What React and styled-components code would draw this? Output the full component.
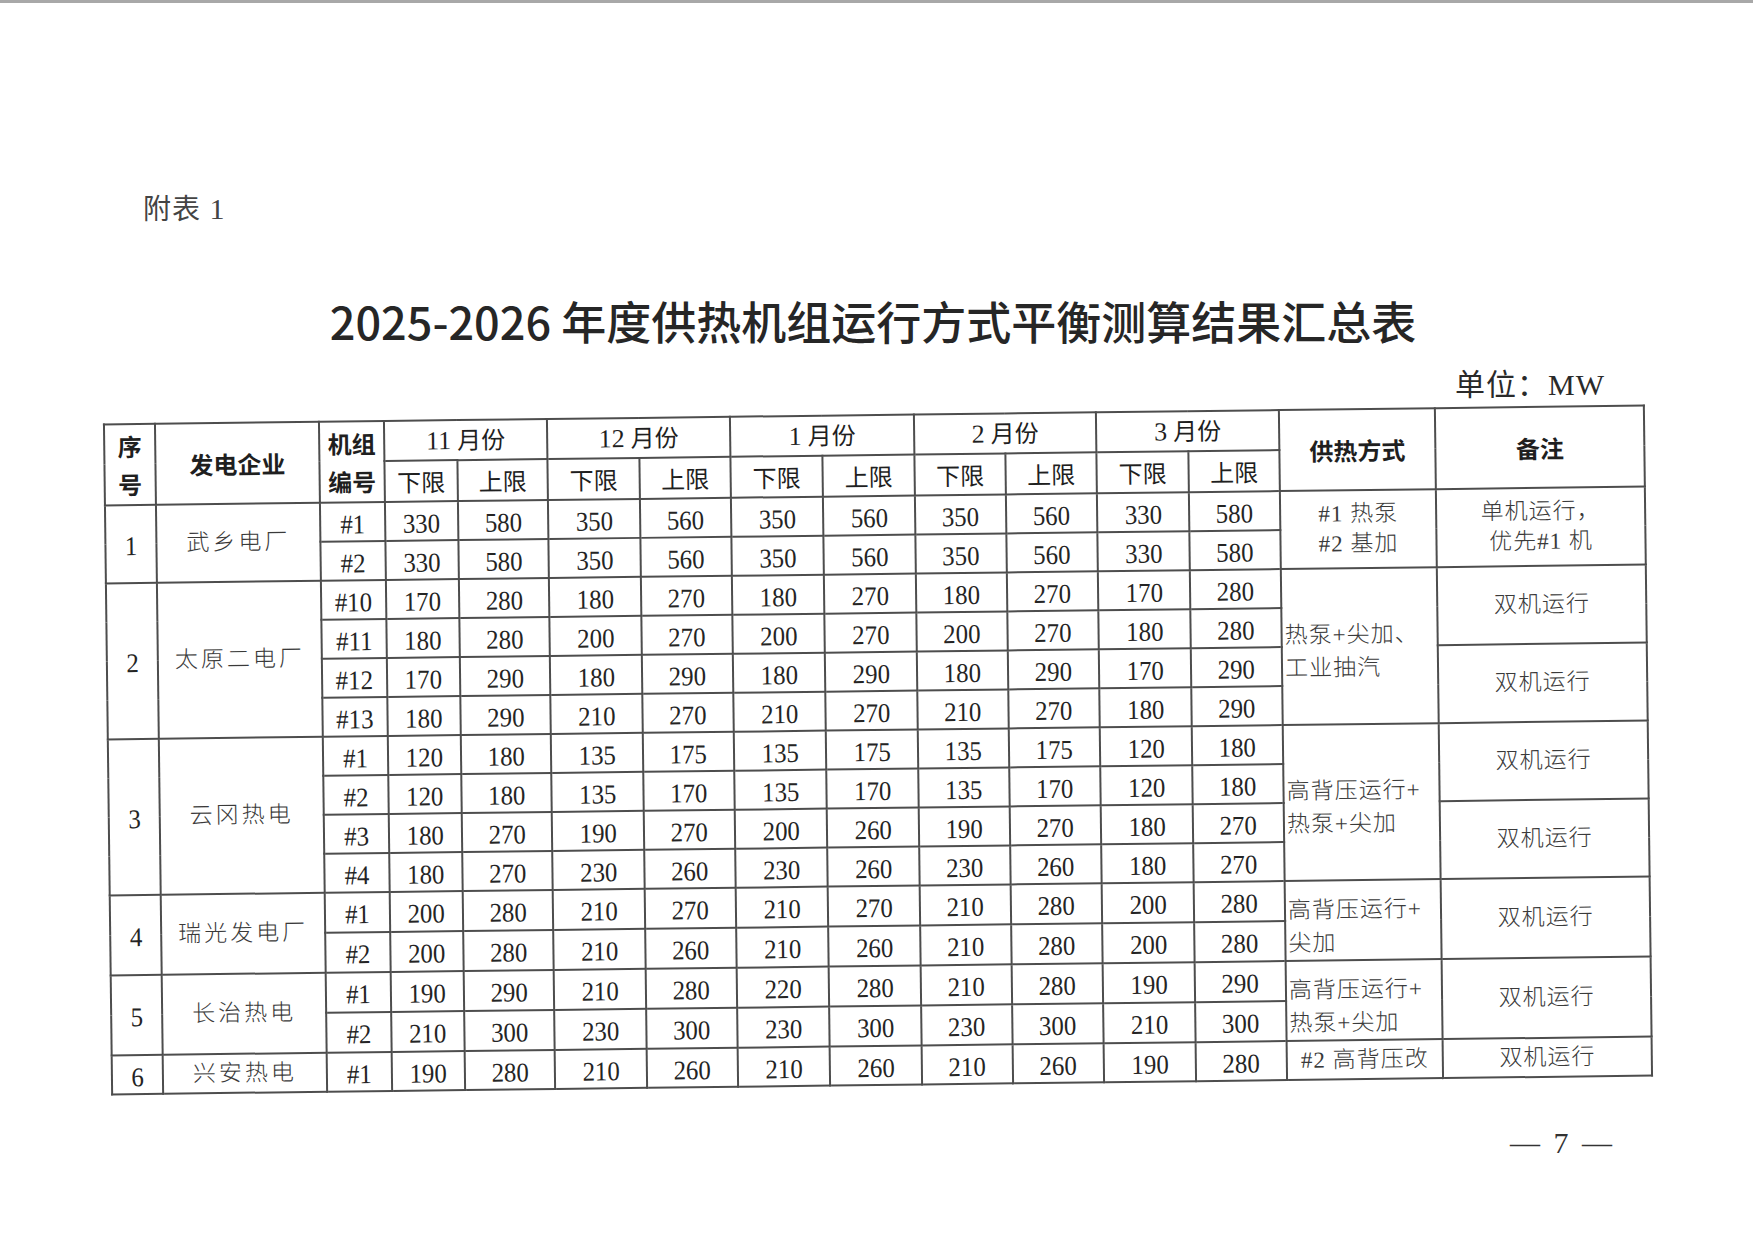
import React from "react";
import styled, { createGlobalStyle } from "styled-components";

const GlobalStyle = createGlobalStyle`
  html, body {
    margin: 0;
    padding: 0;
    background: #fff;
  }
`;

const SERIF = `"Liberation Serif", "Noto Sans CJK SC", serif`;
const SANS = `"Noto Sans CJK SC", sans-serif`;

const COLS = [51, 164, 65, 73, 90, 92, 91, 92, 92, 91, 91, 92, 91, 156, 209];
const MONTHS = ["11", "12", "1", "2", "3"];

const groups = [
  {
    no: 1,
    name: "武乡电厂",
    units: [
      ["#1", [330, 580, 350, 560, 350, 560, 350, 560, 330, 580]],
      ["#2", [330, 580, 350, 560, 350, 560, 350, 560, 330, 580]],
    ],
    heat: { lines: ["#1 热泵", "#2 基加"], align: "center" },
    notes: [{ span: 2, lines: ["单机运行，", "优先#1 机"] }],
  },
  {
    no: 2,
    name: "太原二电厂",
    units: [
      ["#10", [170, 280, 180, 270, 180, 270, 180, 270, 170, 280]],
      ["#11", [180, 280, 200, 270, 200, 270, 200, 270, 180, 280]],
      ["#12", [170, 290, 180, 290, 180, 290, 180, 290, 170, 290]],
      ["#13", [180, 290, 210, 270, 210, 270, 210, 270, 180, 290]],
    ],
    heat: { lines: ["热泵+尖加、", "工业抽汽"], align: "left" },
    notes: [
      { span: 2, lines: ["双机运行"] },
      { span: 2, lines: ["双机运行"] },
    ],
  },
  {
    no: 3,
    name: "云冈热电",
    units: [
      ["#1", [120, 180, 135, 175, 135, 175, 135, 175, 120, 180]],
      ["#2", [120, 180, 135, 170, 135, 170, 135, 170, 120, 180]],
      ["#3", [180, 270, 190, 270, 200, 260, 190, 270, 180, 270]],
      ["#4", [180, 270, 230, 260, 230, 260, 230, 260, 180, 270]],
    ],
    heat: { lines: ["高背压运行+", "热泵+尖加"], align: "left" },
    notes: [
      { span: 2, lines: ["双机运行"] },
      { span: 2, lines: ["双机运行"] },
    ],
  },
  {
    no: 4,
    name: "瑞光发电厂",
    units: [
      ["#1", [200, 280, 210, 270, 210, 270, 210, 280, 200, 280]],
      ["#2", [200, 280, 210, 260, 210, 260, 210, 280, 200, 280]],
    ],
    heat: { lines: ["高背压运行+", "尖加"], align: "left", top: true },
    notes: [{ span: 2, lines: ["双机运行"] }],
  },
  {
    no: 5,
    name: "长治热电",
    units: [
      ["#1", [190, 290, 210, 280, 220, 280, 210, 280, 190, 290]],
      ["#2", [210, 300, 230, 300, 230, 300, 230, 300, 210, 300]],
    ],
    heat: { lines: ["高背压运行+", "热泵+尖加"], align: "left", top: true },
    notes: [{ span: 2, lines: ["双机运行"] }],
  },
  {
    no: 6,
    name: "兴安热电",
    units: [["#1", [190, 280, 210, 260, 210, 260, 210, 260, 190, 280]]],
    heat: { lines: ["#2 高背压改"], align: "center" },
    notes: [{ span: 1, lines: ["双机运行"] }],
  },
];

const Page = styled.div`
  width: 1753px;
  height: 1240px;
  box-sizing: border-box;
  border-top: 3px solid #a8a8a8;
  padding: 188px 0 0 107px;
  display: flex;
  flex-direction: column;
  color: #2e2e2e;
  overflow: hidden;
`;

const Column = styled.div`
  width: 1540px;
  display: flex;
  flex-direction: column;
`;

const Attachment = styled.div`
  margin-left: 36px;
  font-family: ${SANS};
  font-size: 28px;
  line-height: 32px;
  color: #444;
  letter-spacing: 1px;

  span {
    font-family: ${SERIF};
    font-size: 30px;
  }
`;

const Title = styled.h1`
  margin: 70px 0 0;
  padding-right: 8px;
  text-align: center;
  font-family: "Liberation Sans Narrow", ${SANS};
  font-weight: 500;
  font-size: 45px;
  line-height: 52px;
  color: #262626;
`;

const Unit = styled.div`
  margin: 20px 42px 0 0;
  align-self: flex-end;
  font-family: ${SERIF};
  font-size: 30px;
  line-height: 36px;
  color: #2a2a2a;
  letter-spacing: 1px;
`;

const Sheet = styled.table`
  margin-top: 11px;
  width: 1540px;
  table-layout: fixed;
  border-collapse: collapse;
  transform: rotate(-0.7deg);
  transform-origin: 50% 50%;
  font-family: ${SERIF};
  color: #242424;
`;

const Cell = styled.td`
  box-sizing: border-box;
  height: ${(p) => (p.$h ? p.$h : 39)}px;
  padding: 0;
  border: 2px solid #4d4d4d;
  text-align: ${(p) => p.$align || "center"};
  vertical-align: ${(p) => (p.$top ? "top" : "middle")};
  padding-left: ${(p) => (p.$align === "left" ? 2 : 0)}px;
  padding-top: ${(p) => (p.$top ? 12 : p.$align === "left" ? 10 : 0)}px;
`;

const HeadText = styled.div`
  font-family: ${SANS};
  font-weight: ${(p) => (p.$bold ? 700 : 400)};
  font-size: 24px;
  line-height: ${(p) => p.$lh || 30}px;
  color: #1f1f1f;

  b {
    font-family: ${SERIF};
    font-weight: 400;
    font-size: 26px;
    margin-right: 6px;
  }
`;

const Num = styled.span`
  font-family: ${SERIF};
  font-size: 27px;
  line-height: 30px;
  display: inline-block;
  transform: scaleX(0.92) translateY(2px);
`;

const Body = styled.div`
  font-family: ${SERIF};
  font-weight: 300;
  font-size: 23px;
  line-height: ${(p) => p.$lh || 32}px;
  letter-spacing: ${(p) => p.$spacing || 1}px;
  color: #3a3a3a;
`;

const PageNo = styled.div`
  margin: 40px 35px 0 0;
  align-self: flex-end;
  font-family: ${SERIF};
  font-size: 30px;
  line-height: 34px;
  color: #333;
  word-spacing: 6px;
`;

function Lines({ lines, lh }) {
  return (
    <Body $lh={lh}>
      {lines.map((l) => (
        <div key={l}>{l}</div>
      ))}
    </Body>
  );
}

function GroupRows({ g }) {
  const n = g.units.length;
  return g.units.map(([unit, vals], i) => {
    const noteStart = [];
    let acc = 0;
    g.notes.forEach((note) => {
      if (acc === i) noteStart.push(note);
      acc += note.span;
    });
    return (
      <tr key={unit}>
        {i === 0 && (
          <>
            <Cell rowSpan={n}>
              <Num>{g.no}</Num>
            </Cell>
            <Cell rowSpan={n}>
              <Body $spacing={3}>{g.name}</Body>
            </Cell>
          </>
        )}
        <Cell>
          <Num>{unit}</Num>
        </Cell>
        {vals.map((v, k) => (
          <Cell key={k}>
            <Num>{v}</Num>
          </Cell>
        ))}
        {i === 0 && (
          <Cell rowSpan={n} $align={g.heat.align} $top={g.heat.top}>
            <Lines lines={g.heat.lines} lh={g.heat.align === "left" ? 33 : 30} />
          </Cell>
        )}
        {noteStart.map((note, k) => (
          <Cell key={k} rowSpan={note.span}>
            <Lines lines={note.lines} lh={30} />
          </Cell>
        ))}
      </tr>
    );
  });
}

export default function App() {
  return (
    <>
      <GlobalStyle />
      <Page>
        <Column>
          <Attachment>
            附表<span> 1</span>
          </Attachment>
          <Title>2025-2026 年度供热机组运行方式平衡测算结果汇总表</Title>
          <Unit>单位：MW</Unit>
          <Sheet>
            <colgroup>
              {COLS.map((w, i) => (
                <col key={i} style={{ width: w }} />
              ))}
            </colgroup>
            <thead>
              <tr>
                <Cell rowSpan={2} $h={40}>
                  <HeadText $bold $lh={38}>
                    序<br />号
                  </HeadText>
                </Cell>
                <Cell rowSpan={2} $h={40}>
                  <HeadText $bold>发电企业</HeadText>
                </Cell>
                <Cell rowSpan={2} $h={40}>
                  <HeadText $bold $lh={38}>
                    机组<br />编号
                  </HeadText>
                </Cell>
                {MONTHS.map((m) => (
                  <Cell key={m} colSpan={2} $h={40}>
                    <HeadText>
                      <b>{m}</b>月份
                    </HeadText>
                  </Cell>
                ))}
                <Cell rowSpan={2} $h={40}>
                  <HeadText $bold>供热方式</HeadText>
                </Cell>
                <Cell rowSpan={2} $h={40}>
                  <HeadText $bold>备注</HeadText>
                </Cell>
              </tr>
              <tr>
                {MONTHS.map((m) => (
                  <React.Fragment key={m}>
                    <Cell $h={41}>
                      <HeadText>下限</HeadText>
                    </Cell>
                    <Cell $h={41}>
                      <HeadText>上限</HeadText>
                    </Cell>
                  </React.Fragment>
                ))}
              </tr>
            </thead>
            <tbody>
              {groups.map((g) => (
                <GroupRows key={g.no} g={g} />
              ))}
            </tbody>
          </Sheet>
          <PageNo>— 7 —</PageNo>
        </Column>
      </Page>
    </>
  );
}
